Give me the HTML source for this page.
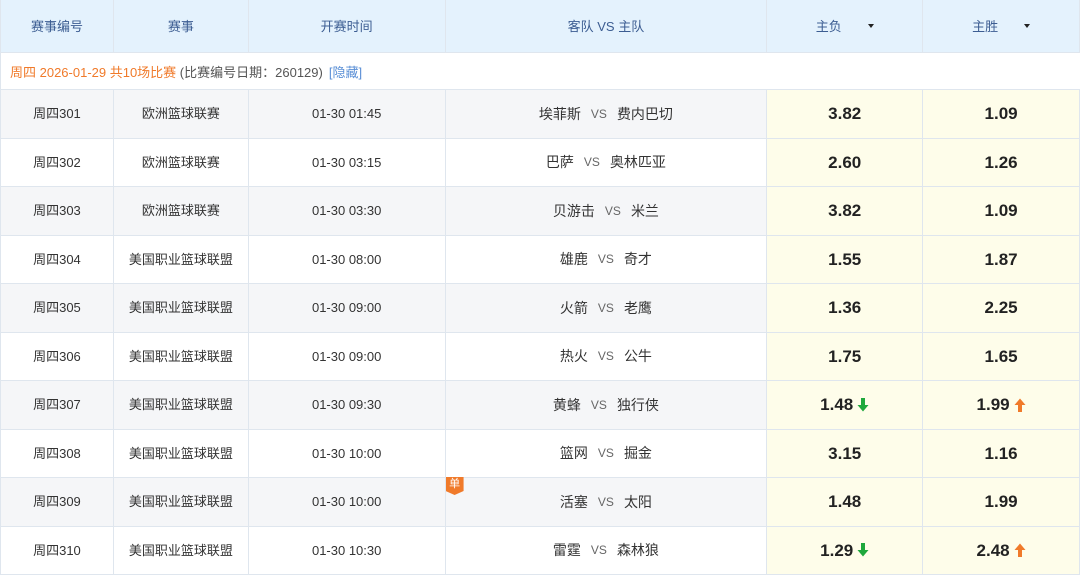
<!DOCTYPE html>
<html><head><meta charset="utf-8"><style>
*{margin:0;padding:0;box-sizing:border-box}
body{width:1080px;height:566px;overflow:hidden;background:#fff;font-family:"Liberation Sans","Noto Sans CJK SC",sans-serif;}
.row{display:flex;border-bottom:1px solid #dfe6ee;}
.c{border-right:1px solid #dfe6ee;display:flex;align-items:center;justify-content:center;font-size:13px;color:#333;white-space:nowrap;position:relative;line-height:1}
.c:nth-child(1){width:114px;border-left:1px solid #dfe6ee}
.c:nth-child(2){width:135px}
.c:nth-child(3){width:197px}
.c:nth-child(4){width:322px}
.c:nth-child(5){width:156px}
.c:nth-child(6){width:157px}
.hd{height:53px;background:#e4f2fd}
.hd .c{color:#3c5d92}
.info{height:37px;display:flex;align-items:center;padding-left:9px;font-size:13px;color:#555;border-bottom:1px solid #dfe6ee;border-left:1px solid #dfe6ee}
.info .o{color:#f07a2a}
.info .h{color:#5a8fd6;margin-left:6px}
.r{height:48.5px}
.g .c{background:#f5f6f8}
.row .od{background:#fefdea;font-size:17px;font-weight:bold;color:#222}
.vs{color:#666;font-size:12px;margin:0 10px}
.t{font-size:14px}
.arr{display:inline-block;width:0;height:0;border-left:3px solid transparent;border-right:3px solid transparent;border-top:4px solid #222;margin-left:26px}
.ic{margin-left:4px}
.dan{position:absolute;left:0;top:-1px;width:18px;height:18px;background:#f07a2a;color:#fff;font-size:11px;line-height:15px;text-align:center;clip-path:polygon(0 0,100% 0,100% 78%,50% 100%,0 78%)}
</style></head><body>
<svg width="0" height="0" style="position:absolute"><defs>
<symbol id="dn" viewBox="0 0 12 14"><path d="M4 0h4v7h3.5L6 13.5 0.5 7H4z" fill="#1fa83c"/></symbol>
<symbol id="up" viewBox="0 0 12 14"><path d="M4 14h4V7h3.5L6 0.5 0.5 7H4z" fill="#f07a2a"/></symbol>
</defs></svg>
<div class="row hd"><div class="c">赛事编号</div><div class="c">赛事</div><div class="c">开赛时间</div><div class="c">客队 VS 主队</div><div class="c">主负<span class="arr"></span></div><div class="c">主胜<span class="arr"></span></div></div>
<div class="info"><span class="o">周四 2026-01-29 共10场比赛</span>&nbsp;(比赛编号日期：260129) <span class="h">[隐藏]</span></div>
<div class="row r g"><div class="c">周四301</div><div class="c">欧洲篮球联赛</div><div class="c">01-30 01:45</div><div class="c t">埃菲斯<span class="vs">VS</span>费内巴切</div><div class="c od">3.82</div><div class="c od">1.09</div></div>
<div class="row r"><div class="c">周四302</div><div class="c">欧洲篮球联赛</div><div class="c">01-30 03:15</div><div class="c t">巴萨<span class="vs">VS</span>奥林匹亚</div><div class="c od">2.60</div><div class="c od">1.26</div></div>
<div class="row r g"><div class="c">周四303</div><div class="c">欧洲篮球联赛</div><div class="c">01-30 03:30</div><div class="c t">贝游击<span class="vs">VS</span>米兰</div><div class="c od">3.82</div><div class="c od">1.09</div></div>
<div class="row r"><div class="c">周四304</div><div class="c">美国职业篮球联盟</div><div class="c">01-30 08:00</div><div class="c t">雄鹿<span class="vs">VS</span>奇才</div><div class="c od">1.55</div><div class="c od">1.87</div></div>
<div class="row r g"><div class="c">周四305</div><div class="c">美国职业篮球联盟</div><div class="c">01-30 09:00</div><div class="c t">火箭<span class="vs">VS</span>老鹰</div><div class="c od">1.36</div><div class="c od">2.25</div></div>
<div class="row r"><div class="c">周四306</div><div class="c">美国职业篮球联盟</div><div class="c">01-30 09:00</div><div class="c t">热火<span class="vs">VS</span>公牛</div><div class="c od">1.75</div><div class="c od">1.65</div></div>
<div class="row r g"><div class="c">周四307</div><div class="c">美国职业篮球联盟</div><div class="c">01-30 09:30</div><div class="c t">黄蜂<span class="vs">VS</span>独行侠</div><div class="c od">1.48<svg class="ic" width="12" height="14"><use href="#dn"/></svg></div><div class="c od">1.99<svg class="ic" width="12" height="14"><use href="#up"/></svg></div></div>
<div class="row r"><div class="c">周四308</div><div class="c">美国职业篮球联盟</div><div class="c">01-30 10:00</div><div class="c t">篮网<span class="vs">VS</span>掘金</div><div class="c od">3.15</div><div class="c od">1.16</div></div>
<div class="row r g"><div class="c">周四309</div><div class="c">美国职业篮球联盟</div><div class="c">01-30 10:00</div><div class="c t"><span class="dan">单</span>活塞<span class="vs">VS</span>太阳</div><div class="c od">1.48</div><div class="c od">1.99</div></div>
<div class="row r"><div class="c">周四310</div><div class="c">美国职业篮球联盟</div><div class="c">01-30 10:30</div><div class="c t">雷霆<span class="vs">VS</span>森林狼</div><div class="c od">1.29<svg class="ic" width="12" height="14"><use href="#dn"/></svg></div><div class="c od">2.48<svg class="ic" width="12" height="14"><use href="#up"/></svg></div></div>
</body></html>
